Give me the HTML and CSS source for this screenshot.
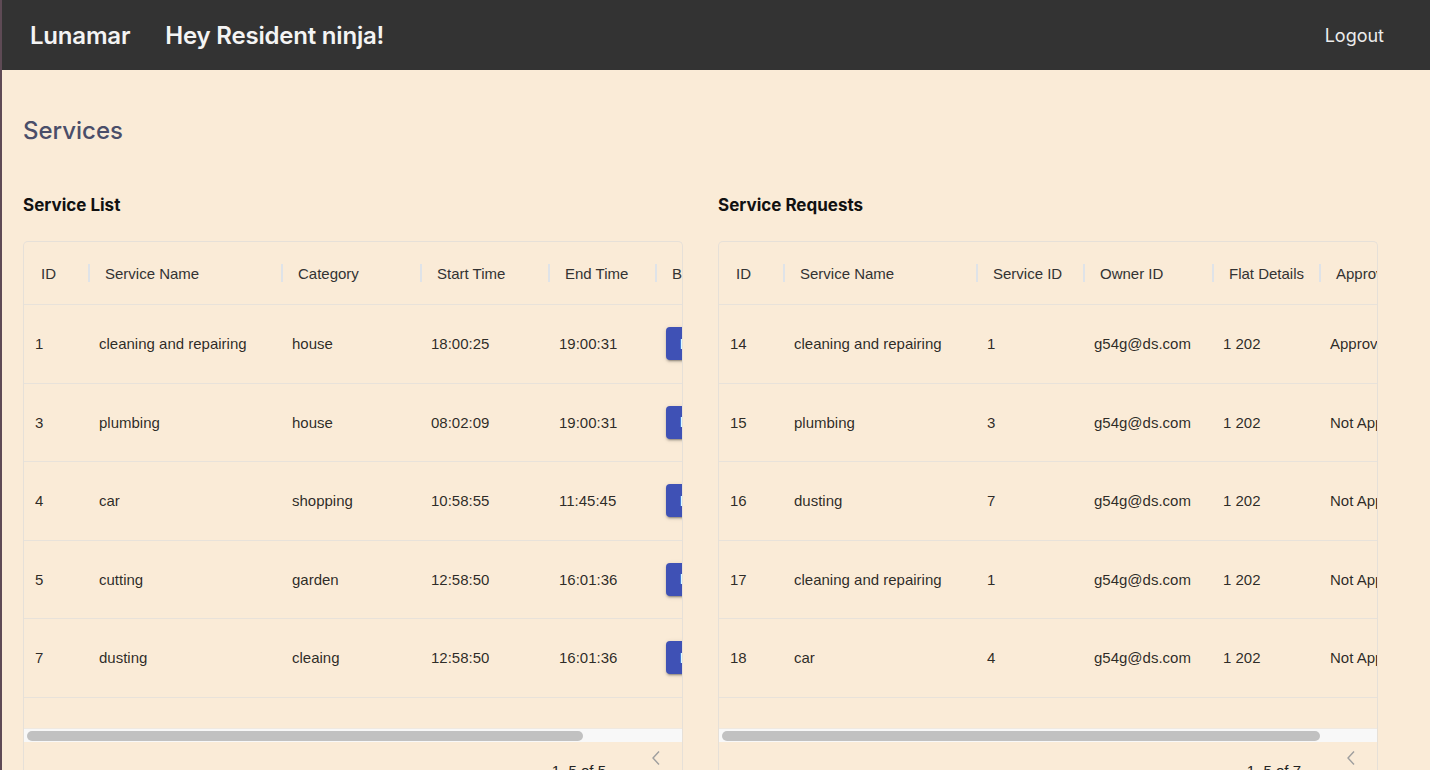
FILE: index.html
```html
<!DOCTYPE html>
<html lang="en">
<head>
<meta charset="utf-8">
<title>Lunamar - Services</title>
<link rel="stylesheet" href="styles.css">
</head>
<body>
<header class="nav">
  <div class="brand">Lunamar</div>
  <div class="greet">Hey Resident ninja!</div>
  <a class="logout" href="#">Logout</a>
</header>
<main class="page">
  <h1 class="title">Services</h1>
  <div class="panels">
    <section class="panel">
      <h2 class="panel-title">Service List</h2>
      <div class="grid">
        <div class="viewport">
          <div class="inner list-cols">
            <div class="row head">
              <div class="hc first">ID</div>
              <div class="hc">Service Name</div>
              <div class="hc">Category</div>
              <div class="hc">Start Time</div>
              <div class="hc">End Time</div>
              <div class="hc last">Book</div>
            </div>
            <div class="row"><div class="c first">1</div><div class="c">cleaning and repairing</div><div class="c">house</div><div class="c">18:00:25</div><div class="c">19:00:31</div><div class="c"><button class="btn">Book</button></div></div>
            <div class="row"><div class="c first">3</div><div class="c">plumbing</div><div class="c">house</div><div class="c">08:02:09</div><div class="c">19:00:31</div><div class="c"><button class="btn">Book</button></div></div>
            <div class="row"><div class="c first">4</div><div class="c">car</div><div class="c">shopping</div><div class="c">10:58:55</div><div class="c">11:45:45</div><div class="c"><button class="btn">Book</button></div></div>
            <div class="row"><div class="c first">5</div><div class="c">cutting</div><div class="c">garden</div><div class="c">12:58:50</div><div class="c">16:01:36</div><div class="c"><button class="btn">Book</button></div></div>
            <div class="row"><div class="c first">7</div><div class="c">dusting</div><div class="c">cleaing</div><div class="c">12:58:50</div><div class="c">16:01:36</div><div class="c"><button class="btn">Book</button></div></div>
          </div>
          <div class="filler"></div>
        </div>
        <div class="scrollbar"><div class="thumb thumb-left"></div></div>
        <div class="footer">
          <div class="pager">
            <svg class="chev" viewBox="0 0 10 16" width="10" height="16"><path d="M8 1.5 L2 8 L8 14.5" fill="none" stroke="#9e9e9e" stroke-width="1.4"/></svg>
            <svg class="chev" viewBox="0 0 10 16" width="10" height="16"><path d="M2 1.5 L8 8 L2 14.5" fill="none" stroke="#9e9e9e" stroke-width="1.4"/></svg>
          </div>
          <div class="count">1–5 of 5</div>
        </div>
      </div>
    </section>
    <section class="panel">
      <h2 class="panel-title">Service Requests</h2>
      <div class="grid">
        <div class="viewport">
          <div class="inner req-cols">
            <div class="row head">
              <div class="hc first">ID</div>
              <div class="hc">Service Name</div>
              <div class="hc">Service ID</div>
              <div class="hc">Owner ID</div>
              <div class="hc">Flat Details</div>
              <div class="hc last">Approval Status</div>
            </div>
            <div class="row"><div class="c first">14</div><div class="c">cleaning and repairing</div><div class="c">1</div><div class="c">g54g@ds.com</div><div class="c">1 202</div><div class="c">Approved</div></div>
            <div class="row"><div class="c first">15</div><div class="c">plumbing</div><div class="c">3</div><div class="c">g54g@ds.com</div><div class="c">1 202</div><div class="c">Not Approved</div></div>
            <div class="row"><div class="c first">16</div><div class="c">dusting</div><div class="c">7</div><div class="c">g54g@ds.com</div><div class="c">1 202</div><div class="c">Not Approved</div></div>
            <div class="row"><div class="c first">17</div><div class="c">cleaning and repairing</div><div class="c">1</div><div class="c">g54g@ds.com</div><div class="c">1 202</div><div class="c">Not Approved</div></div>
            <div class="row"><div class="c first">18</div><div class="c">car</div><div class="c">4</div><div class="c">g54g@ds.com</div><div class="c">1 202</div><div class="c">Not Approved</div></div>
          </div>
          <div class="filler"></div>
        </div>
        <div class="scrollbar"><div class="thumb thumb-right"></div></div>
        <div class="footer">
          <div class="pager">
            <svg class="chev" viewBox="0 0 10 16" width="10" height="16"><path d="M8 1.5 L2 8 L8 14.5" fill="none" stroke="#9e9e9e" stroke-width="1.4"/></svg>
            <svg class="chev" viewBox="0 0 10 16" width="10" height="16"><path d="M2 1.5 L8 8 L2 14.5" fill="none" stroke="#9e9e9e" stroke-width="1.4"/></svg>
          </div>
          <div class="count">1–5 of 7</div>
        </div>
      </div>
    </section>
  </div>
</main>
</body>
</html>
```

FILE: styles.css
```css
* { box-sizing: border-box; }

html, body {
  margin: 0;
  padding: 0;
}

body {
  background: #faebd7;
  border-left: 2px solid #5e4a55;
  font-family: "Liberation Sans", Arial, sans-serif;
  color: rgba(0, 0, 0, 0.84);
  min-height: 100vh;
}

.nav {
  height: 70px;
  background: #333333;
  display: flex;
  align-items: center;
  padding: 0 46px 0 28px;
  font-family: Inter, "Noto Sans", sans-serif;
  color: #f4f4f4;
}

.brand {
  font-size: 24px;
  font-weight: 600;
  letter-spacing: -0.2px;
}

.greet {
  margin-left: 35px;
  font-size: 24px;
  font-weight: 600;
  letter-spacing: -0.2px;
}

.logout {
  margin-left: auto;
  color: #ececec;
  text-decoration: none;
  font-size: 18px;
  font-weight: 400;
}

.page {
  padding: 0 0 0 21px;
}

.title {
  margin: 0;
  padding-top: 46px;
  height: 106px;
  font-family: Inter, "Noto Sans", sans-serif;
  font-size: 24px;
  font-weight: 500;
  color: #4a4e69;
  line-height: 30px;
}

.panels {
  display: grid;
  grid-template-columns: 660px 660px;
  column-gap: 35px;
}

.panel-title {
  margin: 0;
  height: 65px;
  padding-top: 18px;
  font-family: Inter, "Noto Sans", sans-serif;
  font-size: 17px;
  font-weight: 700;
  color: #111;
  line-height: 22px;
}

.grid {
  border: 1px solid #e6e0d8;
  border-bottom: none;
  border-radius: 5px 5px 0 0;
  width: 660px;
  height: 540px;
  overflow: hidden;
}

.viewport {
  overflow: hidden;
  width: 658px;
}

.inner {
  width: 1000px;
}

.row {
  display: grid;
  height: 78.5px;
  border-bottom: 1px solid #e8e2da;
  align-items: center;
  font-size: 15px;
}

.row.head {
  height: 63px;
  color: #333;
}

.list-cols .row {
  grid-template-columns: 65px 193px 139px 128px 107px 200px 168px;
}

.req-cols .row {
  grid-template-columns: 65px 193px 107px 129px 107px 200px 199px;
}

.hc {
  display: flex;
  align-items: center;
  padding-left: 16px;
  height: 100%;
  white-space: nowrap;
}

.hc.first { padding-left: 17px; }

.hc::after {
  content: "";
  margin-left: auto;
  margin-right: -1px;
  width: 2px;
  height: 18px;
  background: #dfe3e8;
}

.hc.last::after { display: none; }

.c {
  padding-left: 10px;
  white-space: nowrap;
}

.c.first { padding-left: 11px; }

.btn {
  display: block;
  height: 33px;
  padding: 0 14px;
  border: none;
  border-radius: 4px;
  background: #3f51b5;
  color: #fff;
  font-family: "Liberation Sans", Arial, sans-serif;
  font-size: 14px;
  font-weight: 700;
  text-transform: uppercase;
  letter-spacing: 0.4px;
  box-shadow: 0 3px 1px -2px rgba(0,0,0,0.2), 0 2px 2px 0 rgba(0,0,0,0.14), 0 1px 5px 0 rgba(0,0,0,0.12);
}

.filler {
  height: 30px;
}

.scrollbar {
  height: 14px;
  background: #f8f8f8;
  padding: 2px 3px;
  border-top: 1px solid #efe9e1;
}

.thumb {
  height: 10px;
  border-radius: 5px;
  background: #c1c1c1;
}

.thumb-left { width: 556px; }
.thumb-right { width: 598px; }

.footer {
  display: flex;
  flex-direction: column;
  align-items: flex-end;
  padding: 8px 21px 0 0;
}

.pager {
  display: flex;
  gap: 34px;
  margin-right: -44px;
}

.chev { display: block; }

.count {
  margin-top: -4px;
  margin-right: 55px;
  font-size: 15px;
  line-height: 18px;
  color: #222;
}
```
